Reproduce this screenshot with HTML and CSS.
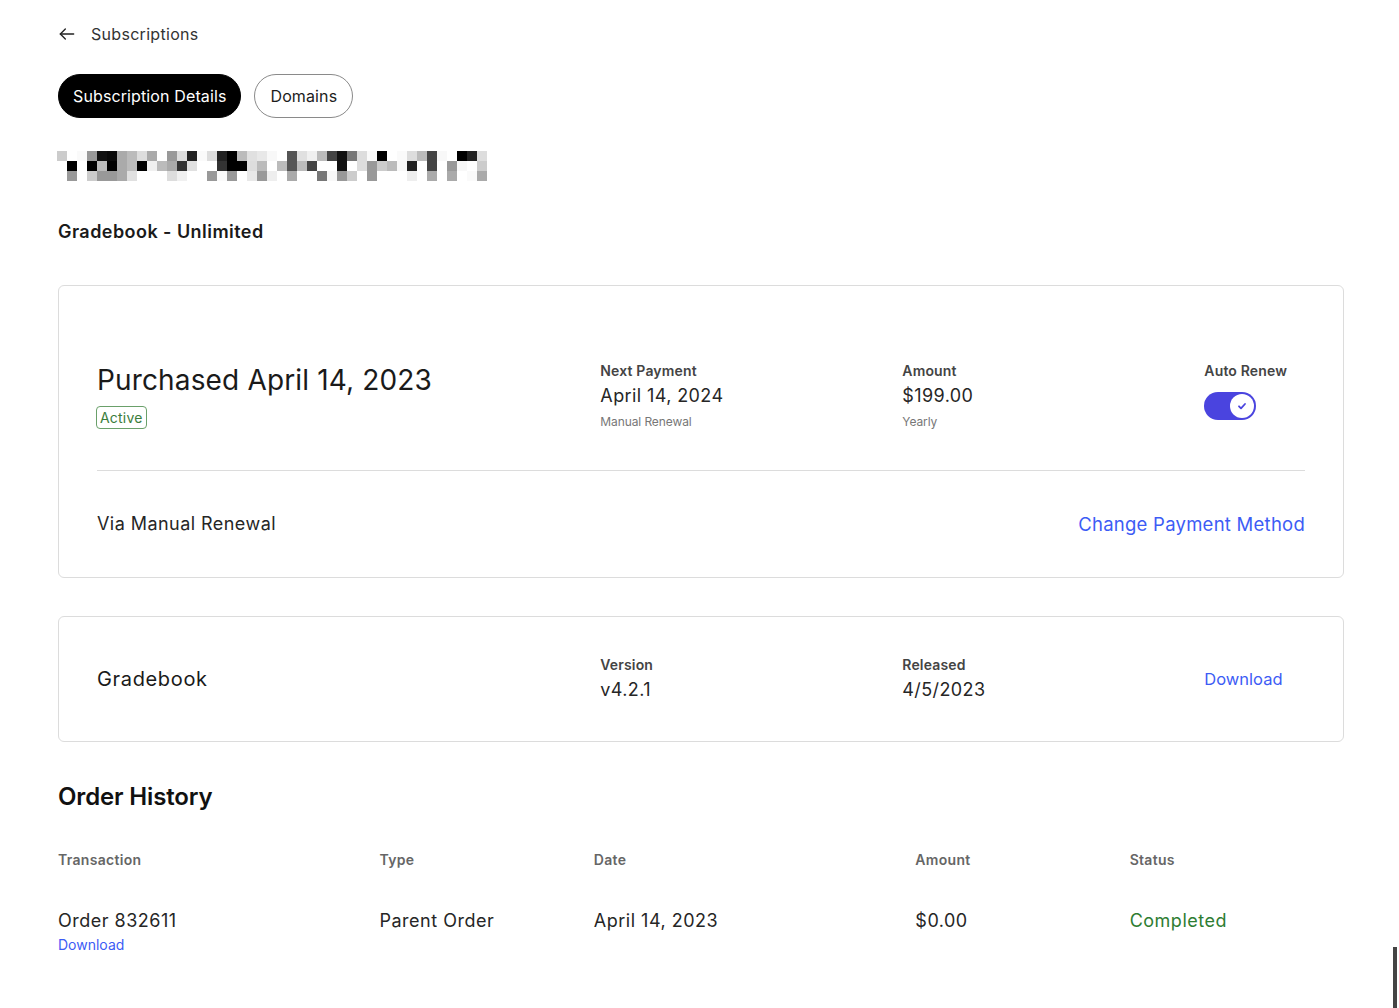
FILE: index.html
```html
<!DOCTYPE html>
<html lang="en">
<head>
<meta charset="utf-8">
<title>Subscription Details</title>
<link rel="stylesheet" href="styles.css">
</head>
<body>
<main class="page">
  <a class="back" href="#">
    <svg class="back-icon" width="20" height="20" viewBox="0 0 24 24" fill="none" stroke="#222" stroke-width="1.6" stroke-linecap="round" stroke-linejoin="round"><path d="M20 12H4"/><path d="M10 6l-6 6 6 6"/></svg>
    <span>Subscriptions</span>
  </a>

  <nav class="tabs">
    <button class="tab tab-active">Subscription Details</button>
    <button class="tab">Domains</button>
  </nav>

  <svg class="redacted" width="430" height="30" viewBox="0 0 430 30" shape-rendering="crispEdges">
    <g>
      <rect x="0" y="0" width="10" height="10" fill="#ccc"/><rect x="20" y="0" width="10" height="10" fill="#fafafa"/><rect x="30" y="0" width="10" height="10" fill="#999"/><rect x="40" y="0" width="10" height="10" fill="#111"/><rect x="50" y="0" width="10" height="10" fill="#0a0a0a"/><rect x="60" y="0" width="10" height="10" fill="#aaa"/><rect x="70" y="0" width="10" height="10" fill="#bbb"/><rect x="80" y="0" width="10" height="10" fill="#ddd"/><rect x="90" y="0" width="10" height="10" fill="#aaa"/><rect x="110" y="0" width="10" height="10" fill="#999"/><rect x="120" y="0" width="10" height="10" fill="#ddd"/><rect x="130" y="0" width="10" height="10" fill="#222"/><rect x="140" y="0" width="10" height="10" fill="#fafafa"/><rect x="150" y="0" width="10" height="10" fill="#ddd"/><rect x="160" y="0" width="10" height="10" fill="#222"/><rect x="170" y="0" width="10" height="10" fill="#000"/><rect x="180" y="0" width="10" height="10" fill="#bbb"/><rect x="190" y="0" width="10" height="10" fill="#e0e0e0"/><rect x="200" y="0" width="10" height="10" fill="#e8e8e8"/><rect x="210" y="0" width="10" height="10" fill="#f8f8f8"/><rect x="230" y="0" width="10" height="10" fill="#555"/><rect x="240" y="0" width="10" height="10" fill="#e0e0e0"/><rect x="250" y="0" width="10" height="10" fill="#f0f0f0"/><rect x="260" y="0" width="10" height="10" fill="#bbb"/><rect x="270" y="0" width="10" height="10" fill="#444"/><rect x="280" y="0" width="10" height="10" fill="#111"/><rect x="290" y="0" width="10" height="10" fill="#777"/><rect x="300" y="0" width="10" height="10" fill="#ddd"/><rect x="310" y="0" width="10" height="10" fill="#fafafa"/><rect x="320" y="0" width="10" height="10" fill="#000"/><rect x="340" y="0" width="10" height="10" fill="#fafafa"/><rect x="350" y="0" width="10" height="10" fill="#ddd"/><rect x="360" y="0" width="10" height="10" fill="#bbb"/><rect x="370" y="0" width="10" height="10" fill="#444"/><rect x="380" y="0" width="10" height="10" fill="#f8f8f8"/><rect x="400" y="0" width="10" height="10" fill="#000"/><rect x="410" y="0" width="10" height="10" fill="#222"/><rect x="420" y="0" width="10" height="10" fill="#ddd"/>
      <rect x="10" y="10" width="10" height="10" fill="#000"/><rect x="30" y="10" width="10" height="10" fill="#000"/><rect x="40" y="10" width="10" height="10" fill="#bbb"/><rect x="50" y="10" width="10" height="10" fill="#000"/><rect x="60" y="10" width="10" height="10" fill="#aaa"/><rect x="70" y="10" width="10" height="10" fill="#bbb"/><rect x="80" y="10" width="10" height="10" fill="#000"/><rect x="90" y="10" width="10" height="10" fill="#f0f0f0"/><rect x="100" y="10" width="10" height="10" fill="#bbb"/><rect x="110" y="10" width="10" height="10" fill="#aaa"/><rect x="120" y="10" width="10" height="10" fill="#333"/><rect x="130" y="10" width="10" height="10" fill="#e0e0e0"/><rect x="160" y="10" width="10" height="10" fill="#333"/><rect x="170" y="10" width="10" height="10" fill="#000"/><rect x="180" y="10" width="10" height="10" fill="#000"/><rect x="190" y="10" width="10" height="10" fill="#ddd"/><rect x="200" y="10" width="10" height="10" fill="#bbb"/><rect x="220" y="10" width="10" height="10" fill="#bbb"/><rect x="230" y="10" width="10" height="10" fill="#555"/><rect x="240" y="10" width="10" height="10" fill="#bbb"/><rect x="250" y="10" width="10" height="10" fill="#444"/><rect x="280" y="10" width="10" height="10" fill="#111"/><rect x="300" y="10" width="10" height="10" fill="#ddd"/><rect x="310" y="10" width="10" height="10" fill="#999"/><rect x="320" y="10" width="10" height="10" fill="#ccc"/><rect x="330" y="10" width="10" height="10" fill="#bbb"/><rect x="340" y="10" width="10" height="10" fill="#f8f8f8"/><rect x="350" y="10" width="10" height="10" fill="#222"/><rect x="370" y="10" width="10" height="10" fill="#444"/><rect x="390" y="10" width="10" height="10" fill="#999"/><rect x="400" y="10" width="10" height="10" fill="#f8f8f8"/><rect x="420" y="10" width="10" height="10" fill="#ccc"/>
      <rect x="10" y="20" width="10" height="10" fill="#999"/><rect x="30" y="20" width="10" height="10" fill="#ccc"/><rect x="40" y="20" width="10" height="10" fill="#999"/><rect x="50" y="20" width="10" height="10" fill="#999"/><rect x="60" y="20" width="10" height="10" fill="#aaa"/><rect x="70" y="20" width="10" height="10" fill="#e0e0e0"/><rect x="110" y="20" width="10" height="10" fill="#ddd"/><rect x="120" y="20" width="10" height="10" fill="#f0f0f0"/><rect x="150" y="20" width="10" height="10" fill="#999"/><rect x="160" y="20" width="10" height="10" fill="#fafafa"/><rect x="170" y="20" width="10" height="10" fill="#999"/><rect x="190" y="20" width="10" height="10" fill="#e8e8e8"/><rect x="200" y="20" width="10" height="10" fill="#999"/><rect x="210" y="20" width="10" height="10" fill="#eee"/><rect x="230" y="20" width="10" height="10" fill="#aaa"/><rect x="260" y="20" width="10" height="10" fill="#777"/><rect x="270" y="20" width="10" height="10" fill="#f8f8f8"/><rect x="280" y="20" width="10" height="10" fill="#999"/><rect x="290" y="20" width="10" height="10" fill="#ccc"/><rect x="310" y="20" width="10" height="10" fill="#999"/><rect x="350" y="20" width="10" height="10" fill="#eee"/><rect x="370" y="20" width="10" height="10" fill="#aaa"/><rect x="390" y="20" width="10" height="10" fill="#aaa"/><rect x="410" y="20" width="10" height="10" fill="#fafafa"/><rect x="420" y="20" width="10" height="10" fill="#aaa"/>
    </g>
  </svg>

  <h2 class="product-name">Gradebook - Unlimited</h2>

  <section class="card card-subscription">
    <div class="sub-top">
      <div class="sub-main">
        <h1 class="purchased">Purchased April 14, 2023</h1>
        <span class="badge-active">Active</span>
      </div>
      <div class="field">
        <div class="field-label">Next Payment</div>
        <div class="field-value">April 14, 2024</div>
        <div class="field-sub">Manual Renewal</div>
      </div>
      <div class="field">
        <div class="field-label">Amount</div>
        <div class="field-value">$199.00</div>
        <div class="field-sub">Yearly</div>
      </div>
      <div class="field">
        <div class="field-label">Auto Renew</div>
        <div class="toggle">
          <span class="toggle-knob">
            <svg width="12" height="12" viewBox="0 0 12 12" fill="none" stroke="#4a44df" stroke-width="1.8" stroke-linecap="round" stroke-linejoin="round"><path d="M3 6.3l2 2 4-4.3"/></svg>
          </span>
        </div>
      </div>
    </div>
    <div class="sub-bottom">
      <span class="via">Via Manual Renewal</span>
      <a class="link link-lg" href="#">Change Payment Method</a>
    </div>
  </section>

  <section class="card card-product">
    <div class="product-title">Gradebook</div>
    <div class="field">
      <div class="field-label">Version</div>
      <div class="field-value">v4.2.1</div>
    </div>
    <div class="field">
      <div class="field-label">Released</div>
      <div class="field-value">4/5/2023</div>
    </div>
    <div class="field">
      <a class="link link-md" href="#">Download</a>
    </div>
  </section>

  <h2 class="section-title">Order History</h2>

  <div class="orders">
    <div class="orders-head">Transaction</div>
    <div class="orders-head">Type</div>
    <div class="orders-head">Date</div>
    <div class="orders-head">Amount</div>
    <div class="orders-head">Status</div>

    <div class="orders-cell">
      <div>Order 832611</div>
      <a class="link link-sm" href="#">Download</a>
    </div>
    <div class="orders-cell">Parent Order</div>
    <div class="orders-cell">April 14, 2023</div>
    <div class="orders-cell">$0.00</div>
    <div class="orders-cell status-completed">Completed</div>
  </div>
</main>
<div class="scroll-thumb"></div>
</body>
</html>
```

FILE: styles.css
```css
* {
  box-sizing: border-box;
}

html, body {
  margin: 0;
  padding: 0;
  background: #ffffff;
}

body {
  font-family: Inter, "Noto Sans", "Liberation Sans", sans-serif;
  color: #1c1c1c;
}

.page {
  padding: 22px 55px 40px 58px;
  display: flex;
  flex-direction: column;
  align-items: flex-start;
}

.back {
  display: flex;
  align-items: center;
  gap: 14px;
  height: 24px;
  font-size: 16px;
  letter-spacing: 0.3px;
  color: #333;
  text-decoration: none;
}

.back-icon {
  display: block;
  margin-left: -1px;
}

.tabs {
  display: flex;
  gap: 13px;
  margin-top: 28px;
}

.tab {
  height: 44px;
  padding: 0 15px;
  border-radius: 22px;
  border: 1px solid #8a8a8a;
  background: #fff;
  font-family: inherit;
  font-size: 16px;
  letter-spacing: 0.12px;
  color: #1c1c1c;
}

.tab-active {
  background: #000;
  border-color: #000;
  color: #fff;
  padding: 0 14px;
}

.redacted {
  display: block;
  margin-top: 33px;
  margin-left: -1px;
}

.product-name {
  margin: 39px 0 0;
  font-size: 18px;
  line-height: 24px;
  font-weight: 600;
  letter-spacing: 0.45px;
  color: #1a1a1a;
}

.card {
  align-self: stretch;
  border: 1px solid #dcdcdc;
  border-radius: 6px;
  background: #fff;
}

.card-subscription {
  margin-top: 41px;
  padding: 38px 38px 41px;
}

.sub-top {
  display: grid;
  grid-template-columns: 5fr 3fr 3fr 1fr;
  align-items: start;
  padding: 38px 0 40px;
  border-bottom: 1px solid #dcdcdc;
}

.sub-main {
  display: flex;
  flex-direction: column;
  align-items: flex-start;
}

.purchased {
  margin: 0;
  font-size: 28px;
  line-height: 36px;
  font-weight: 400;
  letter-spacing: 0.15px;
  color: #1a1a1a;
}

.badge-active {
  margin-top: 8px;
  margin-left: -1px;
  height: 23px;
  padding: 0 3px;
  border: 1px solid #6aa06a;
  border-radius: 4px;
  font-size: 14px;
  line-height: 21px;
  letter-spacing: 0.2px;
  color: #3b7d3b;
}

.field {
  display: flex;
  flex-direction: column;
  align-items: flex-start;
}

.field-label {
  font-size: 14px;
  line-height: 18px;
  font-weight: 600;
  letter-spacing: 0.15px;
  color: #444;
}

.field-value {
  margin-top: 4px;
  font-size: 18px;
  line-height: 24px;
  letter-spacing: 0.4px;
  color: #262626;
}

.field-sub {
  margin-top: 6px;
  font-size: 12px;
  line-height: 16px;
  letter-spacing: -0.1px;
  color: #777;
}

.toggle {
  margin-top: 12px;
  width: 52px;
  height: 28px;
  border-radius: 14px;
  background: #4a44df;
  display: flex;
  align-items: center;
  justify-content: flex-end;
  padding: 0 2px;
}

.toggle-knob {
  width: 24px;
  height: 24px;
  border-radius: 50%;
  background: #fff;
  display: flex;
  align-items: center;
  justify-content: center;
}

.sub-bottom {
  display: flex;
  justify-content: space-between;
  align-items: center;
  padding-top: 41px;
  height: 65px;
}

.via {
  font-size: 18px;
  line-height: 24px;
  letter-spacing: 0.45px;
  color: #262626;
}

.link {
  color: #3d5cf5;
  text-decoration: none;
}

.link-lg {
  font-size: 18.5px;
  line-height: 24px;
  letter-spacing: 0.25px;
}

.link-md {
  font-size: 16.5px;
  line-height: 22px;
}

.link-sm {
  display: block;
  margin-top: 3px;
  font-size: 14px;
  line-height: 18px;
}

.card-product {
  margin-top: 38px;
  padding: 39px 38px;
  display: grid;
  grid-template-columns: 5fr 3fr 3fr 1fr;
  align-items: center;
}

.product-title {
  font-size: 20px;
  line-height: 26px;
  letter-spacing: 0.65px;
  color: #1a1a1a;
}

.section-title {
  margin: 40px 0 0;
  font-size: 24px;
  line-height: 30px;
  font-weight: 600;
  letter-spacing: -0.15px;
  color: #111;
}

.orders {
  align-self: stretch;
  margin-top: 39px;
  display: grid;
  grid-template-columns: 3fr 2fr 3fr 2fr 2fr;
  row-gap: 40px;
}

.orders-head {
  font-size: 14px;
  line-height: 18px;
  font-weight: 600;
  letter-spacing: 0.3px;
  color: #666;
}

.orders-cell {
  font-size: 18px;
  line-height: 24px;
  letter-spacing: 0.5px;
  color: #262626;
}

.orders-cell .link-sm {
  letter-spacing: 0;
}

.status-completed {
  color: #2e7d32;
}

.scroll-thumb {
  position: fixed;
  right: 2px;
  bottom: 0;
  width: 4px;
  height: 61px;
  background: #444;
}
```
